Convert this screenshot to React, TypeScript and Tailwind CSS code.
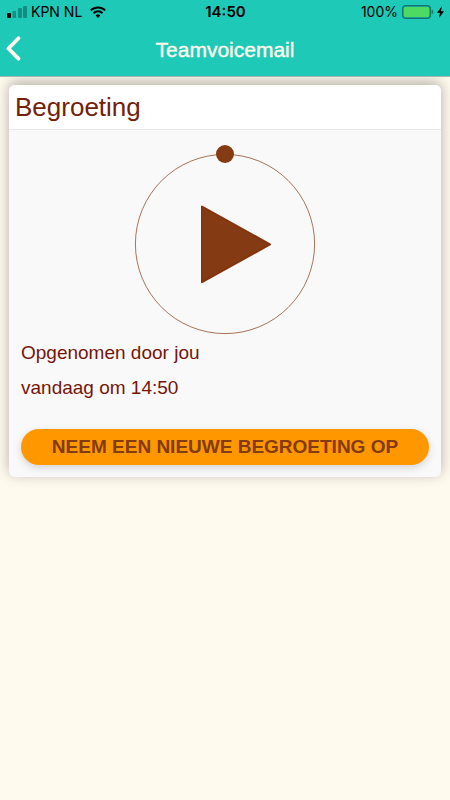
const StatusBar = () => {
  return (
    <div className="grid grid-cols-3 items-center h-6 pl-[7px] pr-[6px] font-[Inter,sans-serif] text-sm leading-4 text-black">
      <div className="flex items-center">
        <svg width="20" height="12" viewBox="0 0 20 12" className="mr-1" aria-hidden="true">
          <rect x="0" y="7" width="4" height="5" rx="1" />
          <rect x="5.5" y="5" width="3.5" height="7" rx="1" opacity="0.3" />
          <rect x="11" y="2" width="4" height="10" rx="1" opacity="0.3" />
          <rect x="16" y="0" width="4" height="12" rx="1" opacity="0.3" />
        </svg>
        <span>KPN NL</span>
        <svg width="16" height="12" viewBox="0 0 16 12" className="ml-2" fill="none" stroke="currentColor" strokeWidth="2" aria-hidden="true">
          <path d="M0.8 4.4a10.2 10.2 0 0 1 14.4 0" />
          <path d="M3.5 7.2a6.4 6.4 0 0 1 9 0" />
          <path d="M8 12 5.6 9.5a3.4 3.4 0 0 1 4.8 0Z" fill="currentColor" stroke="none" />
        </svg>
      </div>
      <span className="text-center text-[15px] leading-4 font-semibold">14:50</span>
      <div className="flex items-center justify-end">
        <span>100%</span>
        <svg width="32" height="14" viewBox="0 0 32 14" className="ml-1" aria-hidden="true">
          <rect x="0.7" y="0.7" width="27.6" height="12.6" rx="3" fill="none" stroke="#12776d" strokeWidth="1.4" />
          <rect x="2" y="2" width="25" height="10" rx="1.5" fill="#4cd964" />
          <path d="M29.6 4.6c2.2 0.6 2.2 4.2 0 4.8Z" fill="#12776d" />
        </svg>
        <svg width="7" height="12" viewBox="0 0 7 12" className="ml-[3px]" aria-hidden="true">
          <path d="M5 0 0 6.8h3L2 12l5-6.8H4Z" />
        </svg>
      </div>
    </div>
  );
};

const Header = () => {
  return (
    <header className="relative z-10 bg-[#1fc9b7] border-b border-[#a9b5b0]">
      <StatusBar />
      <div className="grid grid-cols-[40px_1fr_40px] items-center h-[52px]">
        <button type="button" aria-label="Terug" className="flex h-full pt-3 pl-[6px]">
          <svg width="15" height="25" viewBox="0 0 15 25" fill="none" stroke="#fff9ec" strokeWidth="3.8" strokeLinecap="round" strokeLinejoin="round">
            <path d="M12.4 2.2 2.4 12.5l10 10.2" />
          </svg>
        </button>
        <h1 className="text-center text-[21px] leading-6 text-[#fff9ec] [-webkit-text-stroke:0.4px_#fff9ec]">Teamvoicemail</h1>
      </div>
    </header>
  );
};

const Player = () => {
  return (
    <button type="button" aria-label="Afspelen" className="block mx-auto">
      <svg width="182" height="192" viewBox="0 0 182 192" fill="#843a12">
        <circle cx="91" cy="101" r="89.6" fill="none" stroke="#843a12" strokeWidth="0.7" />
        <circle cx="91" cy="11" r="9" />
        <path d="M68 63.6v75.6l68-37.8Z" stroke="#82350f" strokeWidth="2" strokeLinejoin="round" />
      </svg>
    </button>
  );
};

export default function App() {
  return (
    <div className="min-h-screen bg-[#fffaee] font-['Liberation_Sans',Arial,sans-serif]">
      <Header />
      <main className="px-[9px] pt-2">
        <section className="rounded-md bg-[#f9f9f9] shadow-[0_-3px_14px_rgba(0,0,0,0.3)]">
          <h2 className="rounded-t-md border-b border-[#e8e8e8] bg-white px-[6px] py-[6px] text-[26px] leading-8 text-[#74200a]">
            Begroeting
          </h2>
          <div className="px-3 pt-[13px] pb-3">
            <Player />
            <div className="text-[19px] leading-[35px] text-[#74160a]">
              <p>Opgenomen door jou</p>
              <p>vandaag om 14:50</p>
            </div>
            <button type="button" className="mt-6 h-9 w-full rounded-full bg-[#ff9800] text-[19px] leading-6 font-bold text-[#843a12] shadow-[0_3px_8px_rgba(0,0,0,0.15)]">
              NEEM EEN NIEUWE BEGROETING OP
            </button>
          </div>
        </section>
      </main>
    </div>
  );
}
